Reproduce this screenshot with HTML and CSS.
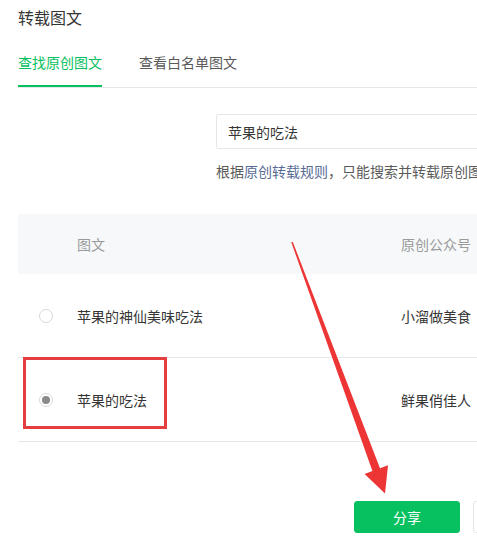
FILE: index.html
```html
<!DOCTYPE html>
<html lang="zh-CN">
  <head>
    <meta charset="UTF-8" />
    <meta name="viewport" content="width=device-width, initial-scale=1.0" />
    <title>转载图文</title>
    <link rel="stylesheet" href="styles.css">
  </head>
  <body>
    <div class="dialog">
      <h1 class="title">转载图文</h1>

      <div class="tabs">
        <a class="tab active" href="#">查找原创图文</a>
        <a class="tab" href="#">查看白名单图文</a>
      </div>

      <div class="search">
        <input class="search-input" type="text" value="苹果的吃法" />
        <p class="hint">根据<a href="#">原创转载规则</a>，只能搜索并转载原创图文，转载后将注明出处</p>
      </div>

      <div class="table">
        <div class="row head">
          <div class="cell check"></div>
          <div class="cell name">图文</div>
          <div class="cell author">原创公众号</div>
        </div>
        <div class="row">
          <div class="cell check"><span class="radio"></span></div>
          <div class="cell name">苹果的神仙美味吃法</div>
          <div class="cell author">小溜做美食</div>
        </div>
        <div class="row">
          <div class="cell check"><span class="radio checked"></span></div>
          <div class="cell name">苹果的吃法</div>
          <div class="cell author">鲜果俏佳人</div>
        </div>
      </div>

      <div class="footer">
        <button class="btn primary" type="button">分享</button>
        <button class="btn" type="button">取消</button>
      </div>

      <!-- annotation over the screenshot -->
      <div class="mark"></div>
      <svg class="arrow" width="477" height="546" viewBox="0 0 477 546">
        <polygon points="291.3,242.3 292.7,241.7 380,468.2 388,465.2 385,493.5 364.6,474 372.4,471" fill="#ee3535" />
      </svg>
    </div>
  </body>
</html>
```

FILE: styles.css
```css
html, body {
    margin: 0;
    padding: 0;
    overflow: hidden;
}
body {
    font-family: "Noto Sans CJK SC", "Liberation Sans", sans-serif;
    font-size: 14px;
    color: #353535;
    background: #fff;
}
.dialog {
    position: relative;
    width: 620px;
    height: 546px;
    padding-left: 18px;
}
.title {
    margin: 0;
    padding-top: 5px;
    font-size: 16px;
    font-weight: normal;
    line-height: 24px;
    color: #353535;
}
.tabs {
    display: flex;
    gap: 37px;
    margin-top: 22px;
    border-bottom: 1px solid #e4e8eb;
    height: 36px;
}
.tab {
    display: block;
    text-decoration: none;
    color: #5a5a5a;
    line-height: 20px;
    height: 34px;
    padding-top: 1px;
}
.tab.active {
    color: #07c160;
    border-bottom: 2px solid #07c160;
    height: 33px;
    margin-bottom: -1px;
}
.search {
    margin-top: 26px;
    padding-left: 198px;
}
.search-input {
    display: block;
    box-sizing: border-box;
    width: 380px;
    height: 35px;
    border: 1px solid #e4e8eb;
    border-radius: 2px;
    padding: 0 11px;
    font-family: inherit;
    font-size: 14px;
    color: #353535;
    outline: none;
}
.hint {
    margin: 12px 0 0;
    line-height: 20px;
    color: #5a5a5a;
    white-space: nowrap;
}
.hint a {
    color: #576b95;
    text-decoration: none;
}
.table {
    margin-top: 33px;
}
.row {
    display: flex;
    align-items: center;
    height: 83px;
    border-bottom: 1px solid #e4e8eb;
}
.row.head {
    height: 60px;
    background: #f6f8f9;
    border-bottom: none;
    color: #9a9a9a;
}
.cell.check {
    width: 59px;
    display: flex;
    justify-content: center;
    padding-right: 2px;
    box-sizing: border-box;
}
.cell.name {
    width: 324px;
}
.radio {
    box-sizing: border-box;
    width: 14px;
    height: 14px;
    border: 1px solid #d8d8d8;
    border-radius: 50%;
    display: flex;
    align-items: center;
    justify-content: center;
    margin-right: 1px;
}
.radio.checked::after {
    content: "";
    width: 8px;
    height: 8px;
    border-radius: 50%;
    background: #8a8a8a;
}
.footer {
    display: flex;
    gap: 13px;
    margin-top: 59px;
    padding-left: 336px;
}
.btn {
    box-sizing: border-box;
    width: 106px;
    height: 32px;
    border: 1px solid #e4e8eb;
    border-radius: 3px;
    background: #fff;
    font-family: inherit;
    font-size: 14px;
    color: #353535;
}
.btn.primary {
    background: #07c160;
    border-color: #07c160;
    color: #fff;
}
.mark {
    position: absolute;
    left: 23px;
    top: 357px;
    width: 138px;
    height: 66px;
    border: 3px solid #e53e3e;
}
.arrow {
    position: absolute;
    left: 0;
    top: 0;
}
```
